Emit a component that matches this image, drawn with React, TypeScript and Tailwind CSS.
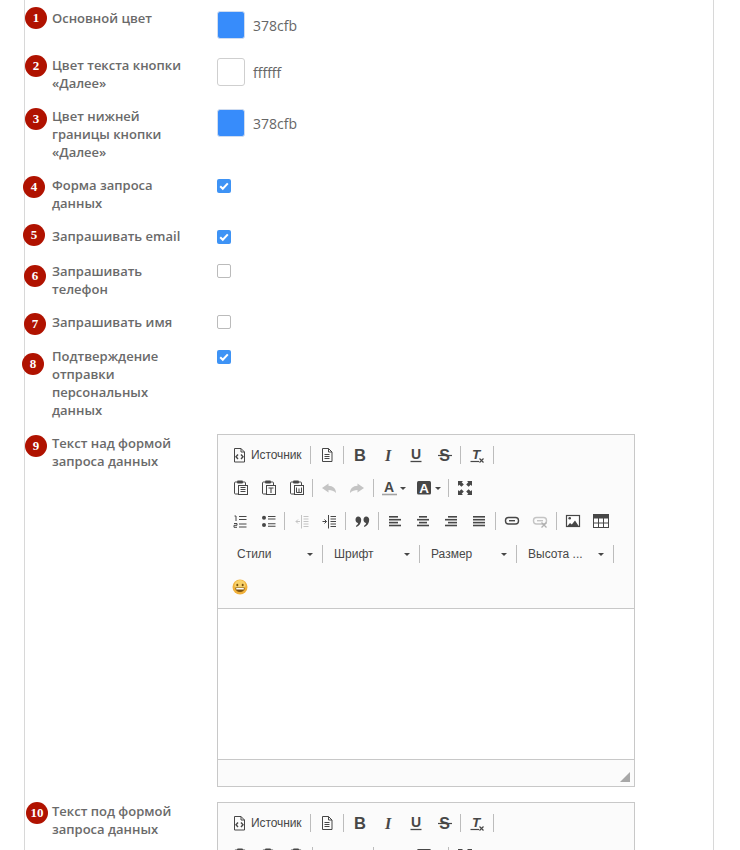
import React from "react";

const D = "#474747";
const G = "#c4c4c4";

function Svg({ children }: { children: React.ReactNode }) {
  return (
    <svg width="16" height="16" viewBox="0 0 16 16" fill="none" className="block">
      {children}
    </svg>
  );
}

const Source = () => (
  <Svg>
    <path d="M3.500 1.500h6.500l3.500 3.500v10h-10z M10 1.500v3.500h3.500" stroke={D} strokeWidth="1" />
    <path d="M7 7.500 5 9.800 7 12M10 7.500l2 2.300-2 2.200" stroke={D} strokeWidth="1.400" />
  </Svg>
);
const NewPage = () => (
  <Svg>
    <path d="M3.500 1.500h6l3.500 3.500v9.500h-9.500z M9.500 1.500v3.500h3.500" stroke={D} strokeWidth="1" />
    <path d="M5.500 7.500h5M5.500 9.500h5M5.500 11.500h5" stroke={D} />
  </Svg>
);
const Clip = ({ children }: { children: React.ReactNode }) => (
  <Svg>
    <path d="M5 2H3.500q-1 0-1 1v10q0 1 1 1H6" stroke={D} strokeWidth="1" />
    <path d="M11 2h1.500q1 0 1 1v2" stroke={D} strokeWidth="1" />
    <rect x="5" y="0.500" width="6" height="3" rx="1" fill={D} />
    <rect x="6.500" y="5.500" width="9" height="9" fill="#fbfbfb" stroke={D} />
    {children}
  </Svg>
);
const Paste = () => (
  <Clip>
    <path d="M8.500 7.500h5M8.500 9.500h5M8.500 11.500h5" stroke={D} />
  </Clip>
);
const PasteText = () => (
  <Clip>
    <path d="M8.500 8h5M11 8v5" stroke={D} strokeWidth="1.100" />
  </Clip>
);
const PasteWord = () => (
  <Clip>
    <path d="M8.500 7.500v5h5v-5M11 8.500v3.500" stroke={D} strokeWidth="1" />
  </Clip>
);
const Undo = () => (
  <Svg>
    <path d="M7.500 3.500 1 8l6.500 4.500V10c3 0 5.200.800 7.500 3 0-4.500-3-7-7.500-7.200z" fill={G} />
  </Svg>
);
const Redo = () => (
  <Svg>
    <path d="M8.500 3.500 15 8l-6.500 4.500V10c-3 0-5.200.800-7.500 3 0-4.500 3-7 7.500-7.200z" fill={G} />
  </Svg>
);
const Letter = ({ t, italic, x = 8, y = 13, size = 15, fill = D, family = "'Liberation Sans', sans-serif" }: { t: string; italic?: boolean; x?: number; y?: number; size?: number; fill?: string; family?: string }) => (
  <text x={x} y={y} textAnchor="middle" fontSize={size} fontWeight="700" fontStyle={italic ? "italic" : "normal"} fontFamily={family} fill={fill}>
    {t}
  </text>
);
const Bold = () => (
  <Svg>
    <Letter t="B" y={14} size={16.500} />
  </Svg>
);
const Italic = () => (
  <Svg>
    <Letter t="I" italic y={13.500} size={16} family="'Liberation Serif', serif" />
  </Svg>
);
const Under = () => (
  <Svg>
    <Letter t="U" y={12} size={14} />
    <path d="M2.500 14.500h11" stroke={D} strokeWidth="1.300" />
  </Svg>
);
const Strike = () => (
  <Svg>
    <Letter t="S" x={8.500} y={14} size={16} />
    <path d="M2 8.500h14" stroke={D} strokeWidth="1.200" />
  </Svg>
);
const RemoveFormat = () => (
  <Svg>
    <Letter t="T" italic x={7} y={11.500} size={13.500} />
    <path d="M1.500 14.500h8.500" stroke={D} strokeWidth="1.200" />
    <path d="M10.500 11.500l4 4M14.500 11.500l-4 4" stroke={D} strokeWidth="1.200" />
  </Svg>
);
const TextColor = () => (
  <Svg>
    <Letter t="A" y={12} size={14} />
    <path d="M1 14.500h15" stroke="#a3a3a3" strokeWidth="1.600" />
  </Svg>
);
const BgColor = () => (
  <Svg>
    <rect x="1" y="1" width="14" height="13.500" rx="1.500" fill={D} />
    <Letter t="A" y={12.800} size={13.500} fill="#fff" />
  </Svg>
);
const Maximize = () => (
  <Svg>
    <path d="M1 1h5L4.700 2.300 6.800 4.400 4.400 6.800 2.300 4.700 1 6zM15 1v5l-1.300-1.300-2.100 2.100-2.400-2.400 2.100-2.100L10 1zM1 15v-5l1.300 1.300 2.100-2.100 2.400 2.400-2.100 2.100L6 15zM15 15h-5l1.300-1.300-2.100-2.100 2.400-2.400 2.100 2.100L15 10z" fill={D} />
  </Svg>
);
const Numbered = () => (
  <Svg>
    <path d="M7 3.500h7.500M7 6.500h7.500M7 11h7.500M7 14h7.500" stroke={D} strokeWidth="1.100" />
    <path d="M2.500 3h1.500v5M2 10.500h3v1.800H2v2h3" stroke={D} strokeWidth="1" />
  </Svg>
);
const Bulleted = () => (
  <Svg>
    <circle cx="4" cy="4.800" r="2" fill={D} />
    <circle cx="4" cy="12" r="2" fill={D} />
    <path d="M8 3.500h7.500M8 6h7.500M8 10.800h7.500M8 13.300h7.500" stroke={D} strokeWidth="1.100" />
  </Svg>
);
const Outdent = () => (
  <Svg>
    <path d="M8.500 2v13.500" stroke={G} />
    <path d="M10.500 3.500h5M10.500 6h5M10.500 8.500h5M10.500 11h5M10.500 13.500h5" stroke={G} />
    <path d="M7 8.500H3M5 6.500 3 8.500l2 2" stroke={G} />
  </Svg>
);
const Indent = () => (
  <Svg>
    <path d="M7.500 2v13.500" stroke={D} />
    <path d="M9.500 3.500h5.500M9.500 6H15M9.500 8.500H15M9.500 11H15M9.500 13.500H15" stroke={D} />
    <path d="M1.500 8.500h4M3.500 6.500l2 2-2 2" stroke={D} />
  </Svg>
);
const Quote = () => (
  <Svg>
    <path d="M4.200 3.500c1.800 0 3 1.300 3 3.200 0 3.300-1.800 6-4.700 7.300l-.6-1c1.200-.8 2-1.800 2.300-3-1.600-.1-2.700-1.300-2.700-3.200 0-1.800 1-3.300 2.700-3.300zM12.200 3.500c1.800 0 3 1.300 3 3.200 0 3.300-1.800 6-4.700 7.300l-.6-1c1.200-.8 2-1.800 2.300-3-1.600-.1-2.700-1.300-2.700-3.200 0-1.800 1-3.300 2.700-3.300z" fill={D} />
  </Svg>
);
const Align = ({ lines }: { lines: [number, number][] }) => (
  <Svg>
    {lines.map(([x1, x2], i) => (
      <path key={i} d={`M${x1} ${3.800 + i * 2.900}H${x2}`} stroke={D} strokeWidth="1.600" />
    ))}
  </Svg>
);
const AL = () => <Align lines={[[2, 11], [2, 14], [2, 11], [2, 14]]} />;
const AC = () => <Align lines={[[4, 12], [2, 14], [4, 12], [2, 14]]} />;
const AR = () => <Align lines={[[5, 14], [2, 14], [5, 14], [2, 14]]} />;
const AJ = () => <Align lines={[[2, 14], [2, 14], [2, 14], [2, 14]]} />;
const LinkI = () => (
  <Svg>
    <rect x="1.500" y="4.500" width="13" height="6.500" rx="3" stroke={D} strokeWidth="1.400" />
    <path d="M5 7.700h6" stroke={D} strokeWidth="1.400" />
  </Svg>
);
const Unlink = () => (
  <Svg>
    <rect x="1.500" y="4.500" width="13" height="6.500" rx="3" stroke={G} strokeWidth="1.400" />
    <path d="M5 7.700h6" stroke={G} strokeWidth="1.400" />
    <path d="M9.500 9.500l5 5M14.500 9.500l-5 5" stroke="#b0b0b0" strokeWidth="1.300" />
  </Svg>
);
const ImageI = () => (
  <Svg>
    <rect x="1.500" y="2.500" width="13" height="11" fill="#fff" stroke={D} strokeWidth="1.200" />
    <circle cx="4.700" cy="5.300" r="1.300" fill={D} />
    <path d="M2 13.500 5 10l1.800 1.500L10 7.500l4 6z" fill={D} />
  </Svg>
);
const TableI = () => (
  <Svg>
    <rect x="0.500" y="1.500" width="15" height="13" fill="#fff" stroke={D} />
    <rect x="0.500" y="1" width="15" height="4.500" fill={D} />
    <path d="M5.500 5v10M10.500 5v10M1 10h14" stroke={D} />
  </Svg>
);
const Smile = () => (
  <svg width="16" height="16" viewBox="0 0 16 16" className="block">
    <circle cx="8" cy="8" r="7.500" fill="#f0b03a" />
    <circle cx="8" cy="6.500" r="5.500" fill="#f8d26a" />
    <ellipse cx="5.300" cy="6" rx="1" ry="1.300" fill="#7a5310" />
    <ellipse cx="10.700" cy="6" rx="1" ry="1.300" fill="#7a5310" />
    <path d="M3.200 8.500h9.600c0 2.800-2 4.600-4.800 4.600S3.200 11.300 3.200 8.500z" fill="#7a5310" />
    <path d="M4.200 9h7.600v1.500H4.200z" fill="#fff" />
  </svg>
);

const Sep = () => <span className="mx-[2px] block h-[18px] w-px shrink-0 bg-[#bcbcbc]" />;
const Btn = ({ children }: { children: React.ReactNode }) => <span className="flex h-7 w-7 shrink-0 items-center justify-center">{children}</span>;
const Arrow = () => <span className="block h-0 w-0 border-x-[3px] border-t-[3px] border-x-transparent border-t-[#474747]" />;
const Combo = ({ label }: { label: string }) => (
  <span className="flex h-7 w-[92px] shrink-0 items-center justify-between pl-[9px] pr-[7px] text-xs text-[#484848]">
    <span>{label}</span>
    <Arrow />
  </span>
);

function Editor() {
  return (
    <div className="w-[418px] border border-[#c8c8c8] bg-white font-['Liberation_Sans',sans-serif]">
      <div className="flex flex-col gap-[5px] border-b border-[#c8c8c8] bg-[#fbfbfb] pb-[7px] pl-[8px] pt-[6px]">
        <div className="flex items-center">
          <span className="flex h-7 w-[82px] shrink-0 items-center pl-[5px] text-xs tracking-[-0.1px] text-[#474747]">
            <Source />
            <span className="ml-[4px]">Источник</span>
          </span>
          <Sep />
          <Btn><NewPage /></Btn>
          <Sep />
          <Btn><Bold /></Btn>
          <Btn><Italic /></Btn>
          <Btn><Under /></Btn>
          <Btn><Strike /></Btn>
          <Sep />
          <Btn><RemoveFormat /></Btn>
          <Sep />
        </div>
        <div className="flex items-center">
          <Btn><Paste /></Btn>
          <Btn><PasteText /></Btn>
          <Btn><PasteWord /></Btn>
          <Sep />
          <Btn><Undo /></Btn>
          <Btn><Redo /></Btn>
          <Sep />
          <span className="flex h-7 w-[36px] shrink-0 items-center gap-[3px] pl-[5px]">
            <TextColor />
            <Arrow />
          </span>
          <span className="flex h-7 w-[34px] shrink-0 items-center gap-[3px] pl-[4px]">
            <BgColor />
            <Arrow />
          </span>
          <Sep />
          <Btn><Maximize /></Btn>
        </div>
        <div className="flex items-center">
          <Btn><Numbered /></Btn>
          <Btn><Bulleted /></Btn>
          <Sep />
          <Btn><Outdent /></Btn>
          <Btn><Indent /></Btn>
          <Sep />
          <Btn><Quote /></Btn>
          <Sep />
          <Btn><AL /></Btn>
          <Btn><AC /></Btn>
          <Btn><AR /></Btn>
          <Btn><AJ /></Btn>
          <Sep />
          <Btn><LinkI /></Btn>
          <Btn><Unlink /></Btn>
          <Sep />
          <Btn><ImageI /></Btn>
          <Btn><TableI /></Btn>
        </div>
        <div className="flex items-center pl-[2px]">
          <Combo label="Стили" />
          <Sep />
          <Combo label="Шрифт" />
          <Sep />
          <Combo label="Размер" />
          <Sep />
          <Combo label="Высота ..." />
          <Sep />
        </div>
        <div className="flex items-center">
          <Btn><Smile /></Btn>
        </div>
      </div>
      <div className="h-[150px] bg-white" />
      <div className="flex h-[27px] items-end justify-end border-t border-[#c8c8c8] bg-[#fbfbfb] pb-[4px] pr-[4px]">
        <span className="block h-0 w-0 border-b-[10px] border-l-[10px] border-b-[#a8a8a8] border-l-transparent" />
      </div>
    </div>
  );
}

function Swatch({ hex, white }: { hex: string; white?: boolean }) {
  return (
    <div className="mt-[2px] flex items-center gap-2">
      <span className={white ? "block h-7 w-7 rounded-[3px] border border-[#cfcfcf] bg-white" : "block h-7 w-7 rounded-[3px] border border-[#cfdcf0] bg-[#378cfb]"} />
      <span className="pt-[2px] text-sm text-[#666]">{hex}</span>
    </div>
  );
}

function Check({ on }: { on?: boolean }) {
  return on ? (
    <span className="mt-[3px] flex h-[14px] w-[14px] items-center justify-center rounded-[2px] bg-[#3e93f5]">
      <svg width="10" height="10" viewBox="0 0 10 10" fill="none">
        <path d="M1.200 5.200 3.800 7.800 8.800 2.400" stroke="#fff" strokeWidth="2" />
      </svg>
    </span>
  ) : (
    <span className="mt-[2px] block h-[14px] w-[14px] rounded-[2px] border border-[#bbb] bg-white" />
  );
}

type RowData = { n: number; label: string; badge: string; row: string; control: React.ReactNode };

const rows: RowData[] = [
  { n: 1, label: "Основной цвет", badge: "left-0 top-[-2px]", row: "h-[32px]", control: <Swatch hex="378cfb" /> },
  { n: 2, label: "Цвет текста кнопки «Далее»", badge: "left-0 top-[-1px]", row: "", control: <Swatch hex="ffffff" white /> },
  { n: 3, label: "Цвет нижней границы кнопки «Далее»", badge: "left-0 top-[1px]", row: "", control: <Swatch hex="378cfb" /> },
  { n: 4, label: "Форма запроса данных", badge: "left-[-2px] top-0", row: "", control: <Check on /> },
  { n: 5, label: "Запрашивать email", badge: "left-[-2px] top-[-3px]", row: "h-[20px]", control: <Check on /> },
  { n: 6, label: "Запрашивать телефон", badge: "left-[-1px] top-[3px]", row: "", control: <Check /> },
  { n: 7, label: "Запрашивать имя", badge: "left-[-1px] top-0", row: "h-[19px]", control: <Check /> },
  { n: 8, label: "Подтверждение отправки персональных данных", badge: "left-[-3px] top-[6px]", row: "", control: <Check on /> },
  { n: 9, label: "Текст над формой запроса данных", badge: "left-0 top-[1px]", row: "", control: <Editor /> },
  { n: 10, label: "Текст под формой запроса данных", badge: "left-[1px] top-0", row: "", control: <Editor /> },
];

export default function App() {
  return (
    <div className="h-[850px] w-[740px] overflow-hidden bg-white font-['Open_Sans',sans-serif]">
      <div className="ml-[24px] h-full w-[690px] border-x border-[#d8d8d8] pt-[9px]">
        {rows.map((r) => (
          <div key={r.n} className={`mb-[15px] flex items-start ${r.row}`}>
            <div className="relative w-[192px] shrink-0 pl-[27px]">
              <span className={`absolute flex h-[22px] w-[22px] items-center justify-center rounded-full bg-[#b01200] font-['Liberation_Serif',serif] text-[13px] font-bold text-white ${r.badge}`}>
                {r.n}
              </span>
              <div className="w-[135px] text-[13px] font-semibold leading-[18px] text-[#6a6a6a]">{r.label}</div>
            </div>
            <div>{r.control}</div>
          </div>
        ))}
      </div>
    </div>
  );
}
